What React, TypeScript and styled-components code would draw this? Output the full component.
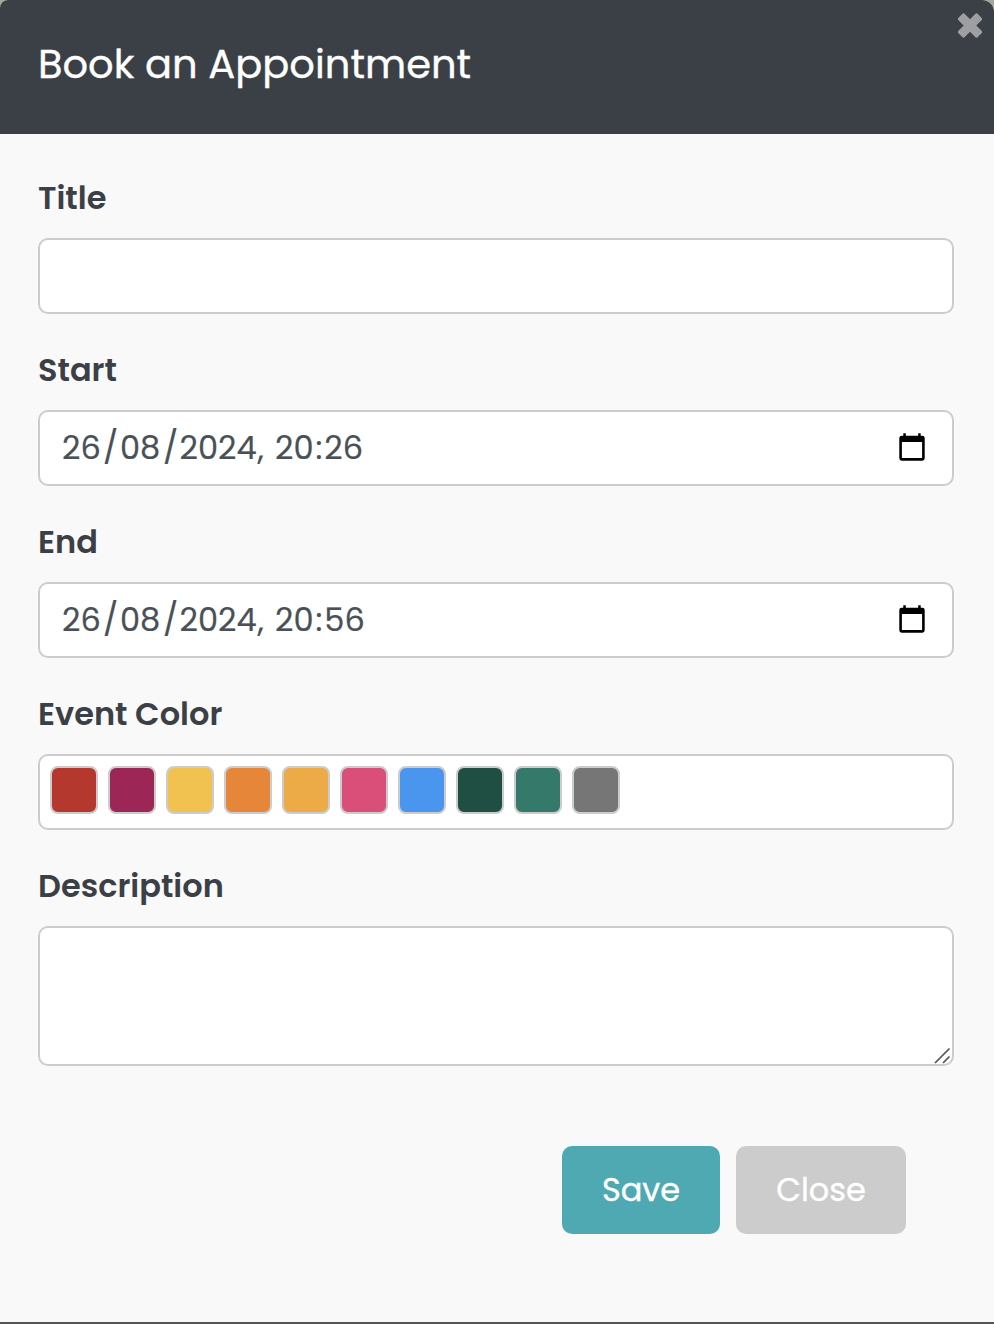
import React from "react";
import styled, { createGlobalStyle } from "styled-components";

const GlobalStyle = createGlobalStyle`
  *, *::before, *::after { box-sizing: border-box; }
  body {
    margin: 0;
    background: #55564f;
    font-family: Poppins, Inter, sans-serif;
    font-feature-settings: "cv11" 1;
    color: #3b3f46;
  }
`;

const Page = styled.div`
  height: 1324px;
  padding-bottom: 2px;
  overflow: hidden;
  background: linear-gradient(#a6a7a0 0 20px, #555 20px);
`;

const Modal = styled.main`
  position: relative;
  height: 1322px;
  display: flex;
  flex-direction: column;
  background: #f9f9f9;
  border-radius: 8px 12px 0 0;
  overflow: hidden;
`;

const Header = styled.header`
  height: 134px;
  padding: 34px 38px 0;
  background: #3b3f46;
`;

const Heading = styled.h1`
  margin: 0;
  font-size: 40px;
  line-height: 60px;
  font-weight: 400;
  white-space: nowrap;
  color: #fff;
  -webkit-text-stroke: 0.35px currentColor;
`;

const Dismiss = styled.button`
  position: absolute;
  top: 13px;
  right: 12px;
  width: 24px;
  height: 25px;
  padding: 0;
  border: 0;
  background: none;
  svg { display: block; }
`;

const Form = styled.form`
  display: flex;
  flex-direction: column;
  gap: 32px;
  padding: 40px 40px 0 38px;
`;

const Field = styled.div`
  display: flex;
  flex-direction: column;
  gap: 16px;
`;

const Label = styled.label`
  align-self: flex-start;
  font-size: 32px;
  line-height: 48px;
  font-weight: 600;
  white-space: nowrap;
`;

const Box = styled.div`
  display: flex;
  align-items: center;
  height: 76px;
  border: 2px solid #ccc;
  border-radius: 10px;
  background: #fff;
`;

const TextInput = styled.input`
  width: 100%;
  height: 76px;
  padding: 0 22px;
  border: 2px solid #ccc;
  border-radius: 10px;
  background: #fff;
  font: inherit;
  font-size: 32px;
`;

const DateBox = styled(Box)`
  justify-content: space-between;
  padding: 0 27px 0 22px;
  font-size: 32px;
  color: #495057;
  -webkit-text-stroke: 0.2px currentColor;

  svg { margin-bottom: 2px; }
`;

const DateParts = styled.div`
  display: flex;
  line-height: 48px;
`;

const Part = styled.span<{ $w: number }>`
  width: ${(p) => p.$w}px;
  white-space: nowrap;
`;

const Time = styled.span`
  display: flex;
  gap: 2px;
`;

const Year = styled(Part)`
  display: flex;
  gap: 1px;
`;

const Palette = styled(Box)`
  align-items: flex-start;
  gap: 10px;
  padding: 10px;
`;

const Swatch = styled.button<{ $color: string }>`
  width: 48px;
  height: 48px;
  padding: 0;
  border: 2px solid #ccc;
  border-radius: 8px;
  background: ${(p) => p.$color};
`;

const AreaWrap = styled.div`
  position: relative;
  height: 140px;
`;

const Area = styled.textarea`
  display: block;
  width: 100%;
  height: 140px;
  padding: 12px 22px;
  border: 2px solid #ccc;
  border-radius: 10px;
  background: #fff;
  font: inherit;
  font-size: 32px;
  resize: none;
`;

const Grip = styled.svg`
  position: absolute;
  right: 3px;
  bottom: 2px;
  pointer-events: none;
`;

const Actions = styled.footer`
  display: flex;
  justify-content: flex-end;
  gap: 16px;
  padding: 80px 88px 0;
`;

const Button = styled.button<{ $w: number; $bg: string }>`
  width: ${(p) => p.$w}px;
  height: 88px;
  padding: 0;
  border: 0;
  border-radius: 10px;
  background: ${(p) => p.$bg};
  color: #fff;
  font: inherit;
  font-size: 32px;
  -webkit-text-stroke: 0.35px currentColor;
`;

const colors = [
  "#b5382f", "#9c2656", "#f1c24f", "#e68638", "#ecab47",
  "#da4f79", "#4a95ee", "#1f4e42", "#35796b", "#767676",
];

const CalendarIcon = () => (
  <svg width="26" height="28" viewBox="0 0 26 28" aria-hidden="true">
    <path
      fillRule="evenodd"
      d="M4.300 0.300h2.500v2.400h12.400V0.300h2.500v2.400h1.600A2.400 2.400 0 0 1 25.700 5.100v20.200a2.400 2.400 0 0 1-2.400 2.400H2.700A2.400 2.400 0 0 1 0.300 25.300v-20.200A2.400 2.400 0 0 1 2.700 2.700h1.600zM2.900 9v16.100h20.200v-16.100z"
    />
  </svg>
);

const DateField = ({ label, hour, minute }: { label: string; hour: string; minute: string }) => (
  <Field>
    <Label>{label}</Label>
    <DateBox>
      <DateParts>
        <Part $w={41}>26</Part>
        <Part $w={17}>/</Part>
        <Part $w={43}>08</Part>
        <Part $w={16.5}>/</Part>
        <Year $w={95.5}>
          <span>2024</span>
          <span>,</span>
        </Year>
        <Time>
          <span>{hour}</span>
          <span>:</span>
          <span>{minute}</span>
        </Time>
      </DateParts>
      <CalendarIcon />
    </DateBox>
  </Field>
);

export default function App() {
  return (
    <Page>
      <GlobalStyle />
      <Modal>
        <Header>
          <Heading>Book an Appointment</Heading>
          <Dismiss type="button" aria-label="Dismiss">
            <svg width="24" height="25" viewBox="0 0 24 25">
              <path
                d="M5.500 1.300 12 7.800 18.500 1.300 23 5.800v0.400L16.800 12.500l6.200 6.300v0.400L18.500 23.700 12 17.200 5.500 23.700 1 19.200v-0.400l6.200-6.300L1 6.200V5.800z"
                fill="#9d9fa2"
                stroke="#9d9fa2"
                strokeWidth="2.200"
                strokeLinejoin="round"
              />
            </svg>
          </Dismiss>
        </Header>
        <Form>
          <Field>
            <Label htmlFor="title">Title</Label>
            <TextInput id="title" />
          </Field>
          <DateField label="Start" hour="20" minute="26" />
          <DateField label="End" hour="20" minute="56" />
          <Field>
            <Label>Event Color</Label>
            <Palette>
              {colors.map((c) => (
                <Swatch key={c} type="button" $color={c} aria-label={c} />
              ))}
            </Palette>
          </Field>
          <Field>
            <Label htmlFor="description">Description</Label>
            <AreaWrap>
              <Area id="description" />
              <Grip width="17" height="17" viewBox="0 0 17 17">
                <path d="M1 16 15.500 1.500M9 16l6.500-6.500" stroke="#555" strokeWidth="1.700" />
              </Grip>
            </AreaWrap>
          </Field>
        </Form>
        <Actions>
          <Button type="button" $w={158} $bg="#4ea9b3">Save</Button>
          <Button type="button" $w={170} $bg="#ccc">Close</Button>
        </Actions>
      </Modal>
    </Page>
  );
}
